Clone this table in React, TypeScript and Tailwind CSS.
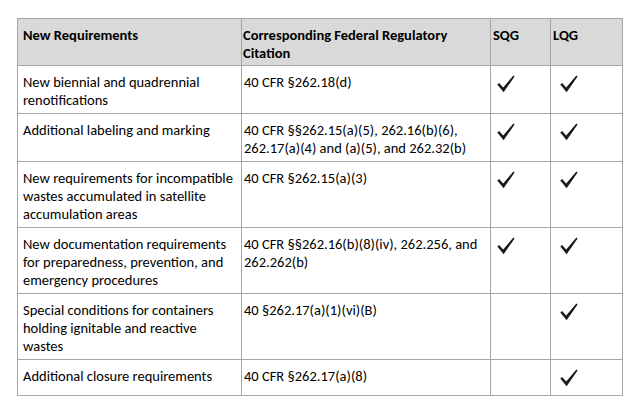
const rows: { req: string[]; cite: string[]; sqg: boolean; lqg: boolean; h: string }[] = [
  {
    req: ['New biennial and quadrennial', 'renotifications'],
    cite: ['40 CFR §262.18(d)'],
    sqg: true,
    lqg: true,
    h: 'h-[47px]',
  },
  {
    req: ['Additional labeling and marking'],
    cite: ['40 CFR §§262.15(a)(5), 262.16(b)(6),', '262.17(a)(4) and (a)(5), and 262.32(b)'],
    sqg: true,
    lqg: true,
    h: 'h-[47px]',
  },
  {
    req: ['New requirements for incompatible', 'wastes accumulated in satellite', 'accumulation areas'],
    cite: ['40 CFR §262.15(a)(3)'],
    sqg: true,
    lqg: true,
    h: 'h-[65px]',
  },
  {
    req: ['New documentation requirements', 'for preparedness, prevention, and', 'emergency procedures'],
    cite: ['40 CFR §§262.16(b)(8)(iv), 262.256, and', '262.262(b)'],
    sqg: true,
    lqg: true,
    h: 'h-[65px]',
  },
  {
    req: ['Special conditions for containers', 'holding ignitable and reactive', 'wastes'],
    cite: ['40 §262.17(a)(1)(vi)(B)'],
    sqg: false,
    lqg: true,
    h: 'h-[65px]',
  },
  {
    req: ['Additional closure requirements'],
    cite: ['40 CFR §262.17(a)(8)'],
    sqg: false,
    lqg: true,
    h: 'h-[35px]',
  },
];

function Check() {
  return (
    <svg width="18" height="18" viewBox="0 0 18 18" className="block">
      <path d="M0.3 9.6 L2.1 8.1 L6.2 12.4 L16.4 0.6 L17.6 1.5 L6.6 17.2 Z" fill="#1a1a1a" />
    </svg>
  );
}

function Lines({ lines }: { lines: string[] }) {
  return (
    <>
      {lines.map((l) => (
        <div key={l} className="whitespace-nowrap">
          {l}
        </div>
      ))}
    </>
  );
}

export default function App() {
  return (
    <div
      className="h-[409px] w-[634px] bg-white pl-[17px] pt-[18px] text-[14.5px] leading-[18px] text-black"
      style={{ fontFamily: 'Carlito, Lato, "Liberation Sans", sans-serif' }}
    >
      <div className="grid w-[606px] grid-cols-[223px_248px_59px_71px] gap-px bg-[#a6a6a6] p-px">
        <div className="h-[46px] bg-[#d9d9d9] pl-[5px] pt-[7px] font-bold">New Requirements</div>
        <div className="h-[46px] bg-[#d9d9d9] pl-px pt-[7px] font-bold">
          <Lines lines={['Corresponding Federal Regulatory', 'Citation']} />
        </div>
        <div className="h-[46px] bg-[#d9d9d9] pl-[2px] pt-[7px] font-bold">SQG</div>
        <div className="h-[46px] bg-[#d9d9d9] pl-[2px] pt-[7px] font-bold">LQG</div>

        {rows.map((r) => (
          <div key={r.req[0]} className="contents">
            <div className={`${r.h} bg-white pl-[5px] pt-[7px]`}>
              <Lines lines={r.req} />
            </div>
            <div className={`${r.h} bg-white pl-[2px] pt-[7px]`}>
              <Lines lines={r.cite} />
            </div>
            <div className={`${r.h} bg-white pl-[6px] pt-[9px]`}>{r.sqg && <Check />}</div>
            <div className={`${r.h} bg-white pl-[9px] pt-[9px]`}>{r.lqg && <Check />}</div>
          </div>
        ))}
      </div>
    </div>
  );
}
